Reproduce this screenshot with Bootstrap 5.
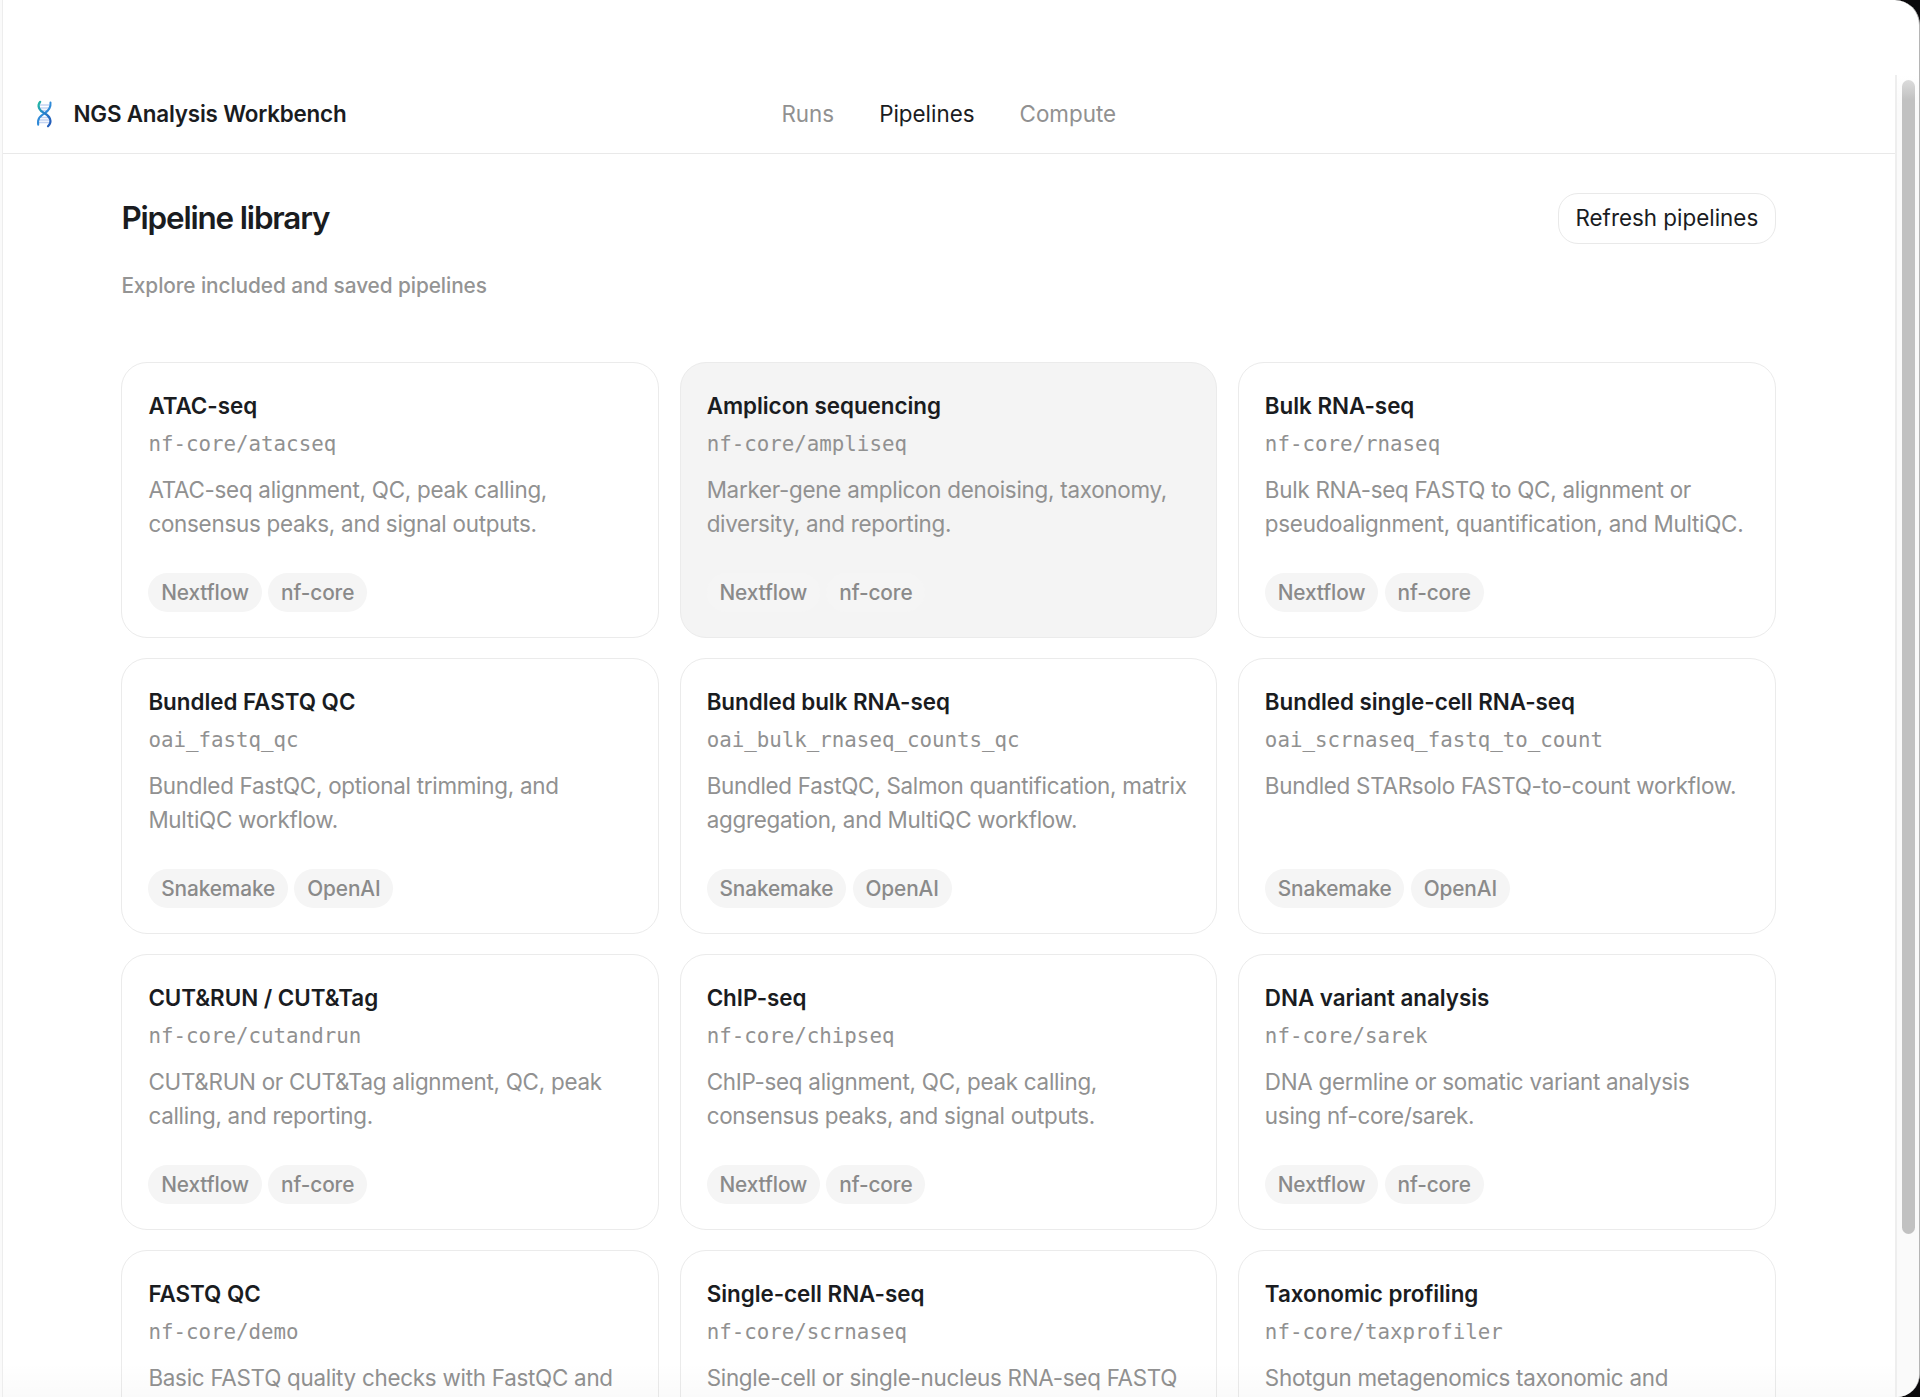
<!DOCTYPE html>
<html lang="en">
<head>
<meta charset="utf-8">
<meta name="viewport" content="width=device-width, initial-scale=1">
<title>NGS Analysis Workbench</title>
<link href="https://cdn.jsdelivr.net/npm/bootstrap@5.3.0/dist/css/bootstrap.min.css" rel="stylesheet">
<style>
body{font-family:Inter,"Liberation Sans",sans-serif;background:#0b0a0c;color:#1a1c1f;height:1397px;overflow:hidden}
.window{height:1397px;width:1919.5px;background:#fff;border-right:1.5px solid #b5b5b5;border-radius:0 25px 23px 0;overflow:hidden;position:relative}
.window-edge{width:3px;border-right:1px solid #ededed;background:#fafafa}
.titlebar{height:75px}
.topnav{height:79px;border-bottom:1.5px solid #e9e9e9;padding:0 31px 0 31px;display:grid;grid-template-columns:1fr auto 1fr;align-items:center}
.brand-name{font-size:22.4px;font-weight:600;letter-spacing:-.19px;margin-left:19.5px}
.navtabs{gap:45px}
.topnav .nav-link{font-size:22.4px;color:#919191;padding:0;line-height:1.5}
.topnav .nav-link.active{color:#1a1c1f}
.library{padding:39px 118.800px 0 118.4px;height:1243px;overflow:hidden}
.library h1{font-size:31.4px;font-weight:600;letter-spacing:-1.15px;line-height:51px}
.refresh{height:51px;border:1.5px solid #e9e9e9;border-radius:20px;font-size:22.4px;padding:0 16.5px;color:#1a1c1f;line-height:1}
.subtitle{font-size:20.8px;font-weight:450;letter-spacing:-.08px;color:#949494;line-height:32px;margin:26px 0 60px}
.pipes{display:grid;grid-template-columns:repeat(3,1fr);gap:20px 20.4px}
.pipe{height:276px;border:1.5px solid #ebebeb;border-radius:26px;padding:26px 25px 25px 26px;background:#fff}
.pipe.hovered{background:#f4f4f4}
.pipe h2{font-size:22.4px;font-weight:600;line-height:34px;letter-spacing:-.03px;margin:0}
.pipe code{font-family:"DejaVu Sans Mono",monospace;font-size:20.8px;line-height:32px;color:#919191;margin-top:5.4px;display:block}
.pipe p{font-size:22.4px;line-height:33.6px;letter-spacing:-.26px;color:#919191;margin:12.6px -10px 0 0;white-space:nowrap}
.pills{gap:6.4px}
.pill{height:39px;border-radius:20px;background:#f5f5f5;color:#8a8a8a;font-size:20.8px;font-weight:450;letter-spacing:-.09px;padding:0 12.8px;line-height:39px}
.track{width:24px;margin-top:75px;border-left:2px solid #eee;background:linear-gradient(#fff,#fafafa 30px)}
.thumb{width:13px;height:1154px;border-radius:7px;margin:5px 0 0 5px;background:linear-gradient(#dcdcdc,#c1c1c1 20px)}
.bottom-shade{left:3px;right:24px;bottom:0;height:34px;background:linear-gradient(transparent,rgba(0,0,0,.018));pointer-events:none}
</style>
</head>
<body>
<div class="window d-flex">
  <div class="window-edge flex-shrink-0"></div>
  <div class="flex-grow-1">
    <div class="titlebar"></div>
    <header class="topnav">
      <div class="d-flex align-items-center">
        <svg width="20" height="28" viewBox="0 0 20 28" fill="none" stroke-linecap="round">
          <defs><linearGradient id="dna" x1="0" y1="0" x2="1" y2="1"><stop stop-color="#25b9a3"/><stop offset=".4" stop-color="#2484cc"/><stop offset="1" stop-color="#2459b8"/></linearGradient></defs>
          <path d="M6 5h9M6.500 8h8M8 10.500h5M7.500 17.500h6M5 20h10M4.500 22.500h10" stroke="#c3d3f2" stroke-width="1.400"/>
          <path d="M16.500 2.500c.6 5.500-2 8.300-6 10.800S3 18.500 4.200 24.800" stroke="#2f8ad8" stroke-width="2"/>
          <path d="M6.200 1.800C2.500 6 5.500 10.800 10.500 13.300s8.500 8 3.500 13" stroke="url(#dna)" stroke-width="2.200"/>
        </svg>
        <span class="brand-name text-nowrap">NGS Analysis Workbench</span>
      </div>
      <nav class="nav navtabs">
        <a class="nav-link" href="#">Runs</a>
        <a class="nav-link active" href="#">Pipelines</a>
        <a class="nav-link" href="#">Compute</a>
      </nav>
    </header>
    <main class="library">
      <div class="d-flex justify-content-between align-items-center">
        <h1 class="mb-0">Pipeline library</h1>
        <button class="btn refresh">Refresh pipelines</button>
      </div>
      <p class="subtitle">Explore included and saved pipelines</p>
      <div class="pipes">
        <article class="pipe d-flex flex-column"><h2>ATAC-seq</h2><code>nf-core/atacseq</code><p>ATAC-seq alignment, QC, peak calling,<br>consensus peaks, and signal outputs.</p><div class="pills d-flex mt-auto"><span class="pill">Nextflow</span><span class="pill">nf-core</span></div></article>
        <article class="pipe hovered d-flex flex-column"><h2>Amplicon sequencing</h2><code>nf-core/ampliseq</code><p>Marker-gene amplicon denoising, taxonomy,<br>diversity, and reporting.</p><div class="pills d-flex mt-auto"><span class="pill">Nextflow</span><span class="pill">nf-core</span></div></article>
        <article class="pipe d-flex flex-column"><h2>Bulk RNA-seq</h2><code>nf-core/rnaseq</code><p>Bulk RNA-seq FASTQ to QC, alignment or<br>pseudoalignment, quantification, and MultiQC.</p><div class="pills d-flex mt-auto"><span class="pill">Nextflow</span><span class="pill">nf-core</span></div></article>
        <article class="pipe d-flex flex-column"><h2>Bundled FASTQ QC</h2><code>oai_fastq_qc</code><p>Bundled FastQC, optional trimming, and<br>MultiQC workflow.</p><div class="pills d-flex mt-auto"><span class="pill">Snakemake</span><span class="pill">OpenAI</span></div></article>
        <article class="pipe d-flex flex-column"><h2>Bundled bulk RNA-seq</h2><code>oai_bulk_rnaseq_counts_qc</code><p>Bundled FastQC, Salmon quantification, matrix<br>aggregation, and MultiQC workflow.</p><div class="pills d-flex mt-auto"><span class="pill">Snakemake</span><span class="pill">OpenAI</span></div></article>
        <article class="pipe d-flex flex-column"><h2>Bundled single-cell RNA-seq</h2><code>oai_scrnaseq_fastq_to_count</code><p>Bundled STARsolo FASTQ-to-count workflow.</p><div class="pills d-flex mt-auto"><span class="pill">Snakemake</span><span class="pill">OpenAI</span></div></article>
        <article class="pipe d-flex flex-column"><h2>CUT&amp;RUN / CUT&amp;Tag</h2><code>nf-core/cutandrun</code><p>CUT&amp;RUN or CUT&amp;Tag alignment, QC, peak<br>calling, and reporting.</p><div class="pills d-flex mt-auto"><span class="pill">Nextflow</span><span class="pill">nf-core</span></div></article>
        <article class="pipe d-flex flex-column"><h2>ChIP-seq</h2><code>nf-core/chipseq</code><p>ChIP-seq alignment, QC, peak calling,<br>consensus peaks, and signal outputs.</p><div class="pills d-flex mt-auto"><span class="pill">Nextflow</span><span class="pill">nf-core</span></div></article>
        <article class="pipe d-flex flex-column"><h2>DNA variant analysis</h2><code>nf-core/sarek</code><p>DNA germline or somatic variant analysis<br>using nf-core/sarek.</p><div class="pills d-flex mt-auto"><span class="pill">Nextflow</span><span class="pill">nf-core</span></div></article>
        <article class="pipe d-flex flex-column"><h2>FASTQ QC</h2><code>nf-core/demo</code><p>Basic FASTQ quality checks with FastQC and</p></article>
        <article class="pipe d-flex flex-column"><h2>Single-cell RNA-seq</h2><code>nf-core/scrnaseq</code><p>Single-cell or single-nucleus RNA-seq FASTQ</p></article>
        <article class="pipe d-flex flex-column"><h2>Taxonomic profiling</h2><code>nf-core/taxprofiler</code><p>Shotgun metagenomics taxonomic and</p></article>
      </div>
    </main>
  </div>
  <div class="track flex-shrink-0"><div class="thumb"></div></div>
  <div class="bottom-shade position-absolute"></div>
</div>
<script src="https://cdn.jsdelivr.net/npm/bootstrap@5.3.0/dist/js/bootstrap.bundle.min.js"></script>
</body>
</html>
